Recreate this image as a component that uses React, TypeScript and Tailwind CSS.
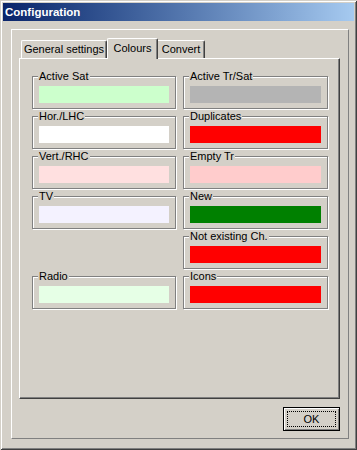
import React from "react";

type G = { label: string; bg: string } | null;

const left: G[] = [
  { label: "Active Sat", bg: "bg-[#ccffcc]" },
  { label: "Hor./LHC", bg: "bg-[#ffffff]" },
  { label: "Vert./RHC", bg: "bg-[#ffe0e0]" },
  { label: "TV", bg: "bg-[#f4f2ff]" },
  null,
  { label: "Radio", bg: "bg-[#e6ffe6]" },
];

const right: G[] = [
  { label: "Active Tr/Sat", bg: "bg-[#b4b4b4]" },
  { label: "Duplicates", bg: "bg-[#ff0000]" },
  { label: "Empty Tr", bg: "bg-[#ffcccc]" },
  { label: "New", bg: "bg-[#008000]" },
  { label: "Not existing Ch.", bg: "bg-[#ff0000]" },
  { label: "Icons", bg: "bg-[#ff0000]" },
];

function Group({ g }: { g: G }) {
  if (!g) return <div className="h-[33px]" />;
  return (
    <div className="relative h-[33px] border border-[#808080] shadow-[inset_1px_1px_0_#ffffff,1px_1px_0_#ffffff] pt-[9px] px-[6px]">
      <span className="absolute left-[5px] top-[-7px] bg-[#d4d0c8] px-[1px] text-[11px] leading-[13px] text-black whitespace-nowrap">
        {g.label}
      </span>
      <div className={`h-[17px] w-full ${g.bg}`} />
    </div>
  );
}

export default function App() {
  const rows = [0, 1, 2, 3, 4, 5];
  return (
    <div
      className="w-[357px] h-[450px] bg-[#d4d0c8] p-[3px] shadow-[inset_1px_1px_0_#d4d0c8,inset_-1px_-1px_0_#404040,inset_2px_2px_0_#ffffff,inset_-2px_-2px_0_#808080] flex flex-col"
      style={{ fontFamily: '"Liberation Sans", Arial, sans-serif' }}
    >
      {/* Title bar */}
      <div className="h-[18px] w-[351px] bg-gradient-to-r from-[#0a246a] to-[#a6caf0] flex items-center pl-[2px]">
        <span className="text-white font-bold text-[11.5px] leading-[14px]">Configuration</span>
      </div>

      {/* Inner panel */}
      <div className="mt-[8px] ml-[8px] w-[338px] h-[410px] border border-t-white border-l-white border-r-[#808080] border-b-[#808080] pt-[8px] pl-[7px] flex flex-col">
        {/* Tab row */}
        <div className="h-[20px] flex items-end pl-[2px] text-[11px] text-black">
          <div className="w-[86px] h-[18px] border-t border-l border-white border-r border-r-[#404040] shadow-[inset_-1px_0_0_#808080] rounded-tl-[2px] rounded-tr-[2px] flex items-start justify-center pt-[2px] leading-[13px]">
            General settings
          </div>
          <div className="relative z-10 w-[51px] h-[21px] -mb-[1px] bg-[#d4d0c8] border-t border-l border-white border-r border-r-[#404040] shadow-[inset_-1px_0_0_#808080] rounded-tl-[2px] rounded-tr-[2px] flex items-start justify-center pt-[3px] leading-[13px]">
            Colours
          </div>
          <div className="w-[47px] h-[18px] border-t border-white border-r border-r-[#404040] shadow-[inset_-1px_0_0_#808080] rounded-tr-[2px] flex items-start justify-center pt-[2px] leading-[13px]">
            Convert
          </div>
        </div>

        {/* Tab page */}
        <div className="w-[321px] h-[341px] border border-t-white border-l-white border-r-[#404040] border-b-[#404040] shadow-[inset_-1px_-1px_0_#808080] pt-[17px] pl-[12px]">
          <div className="grid grid-cols-[144px_145px] gap-x-[7px] gap-y-[7px]">
            {rows.map((i) => (
              <React.Fragment key={i}>
                <Group g={left[i]} />
                <Group g={right[i]} />
              </React.Fragment>
            ))}
          </div>
        </div>

        {/* Button row */}
        <div className="w-[321px] flex justify-end mt-[8px]">
          <button className="relative w-[57px] h-[24px] bg-[#d4d0c8] border border-black shadow-[inset_1px_1px_0_#ffffff,inset_-1px_-1px_0_#808080] text-[11px] text-black flex items-center justify-center">
            <span className="absolute inset-[3px] border border-dotted border-black" />
            OK
          </button>
        </div>
      </div>
    </div>
  );
}
